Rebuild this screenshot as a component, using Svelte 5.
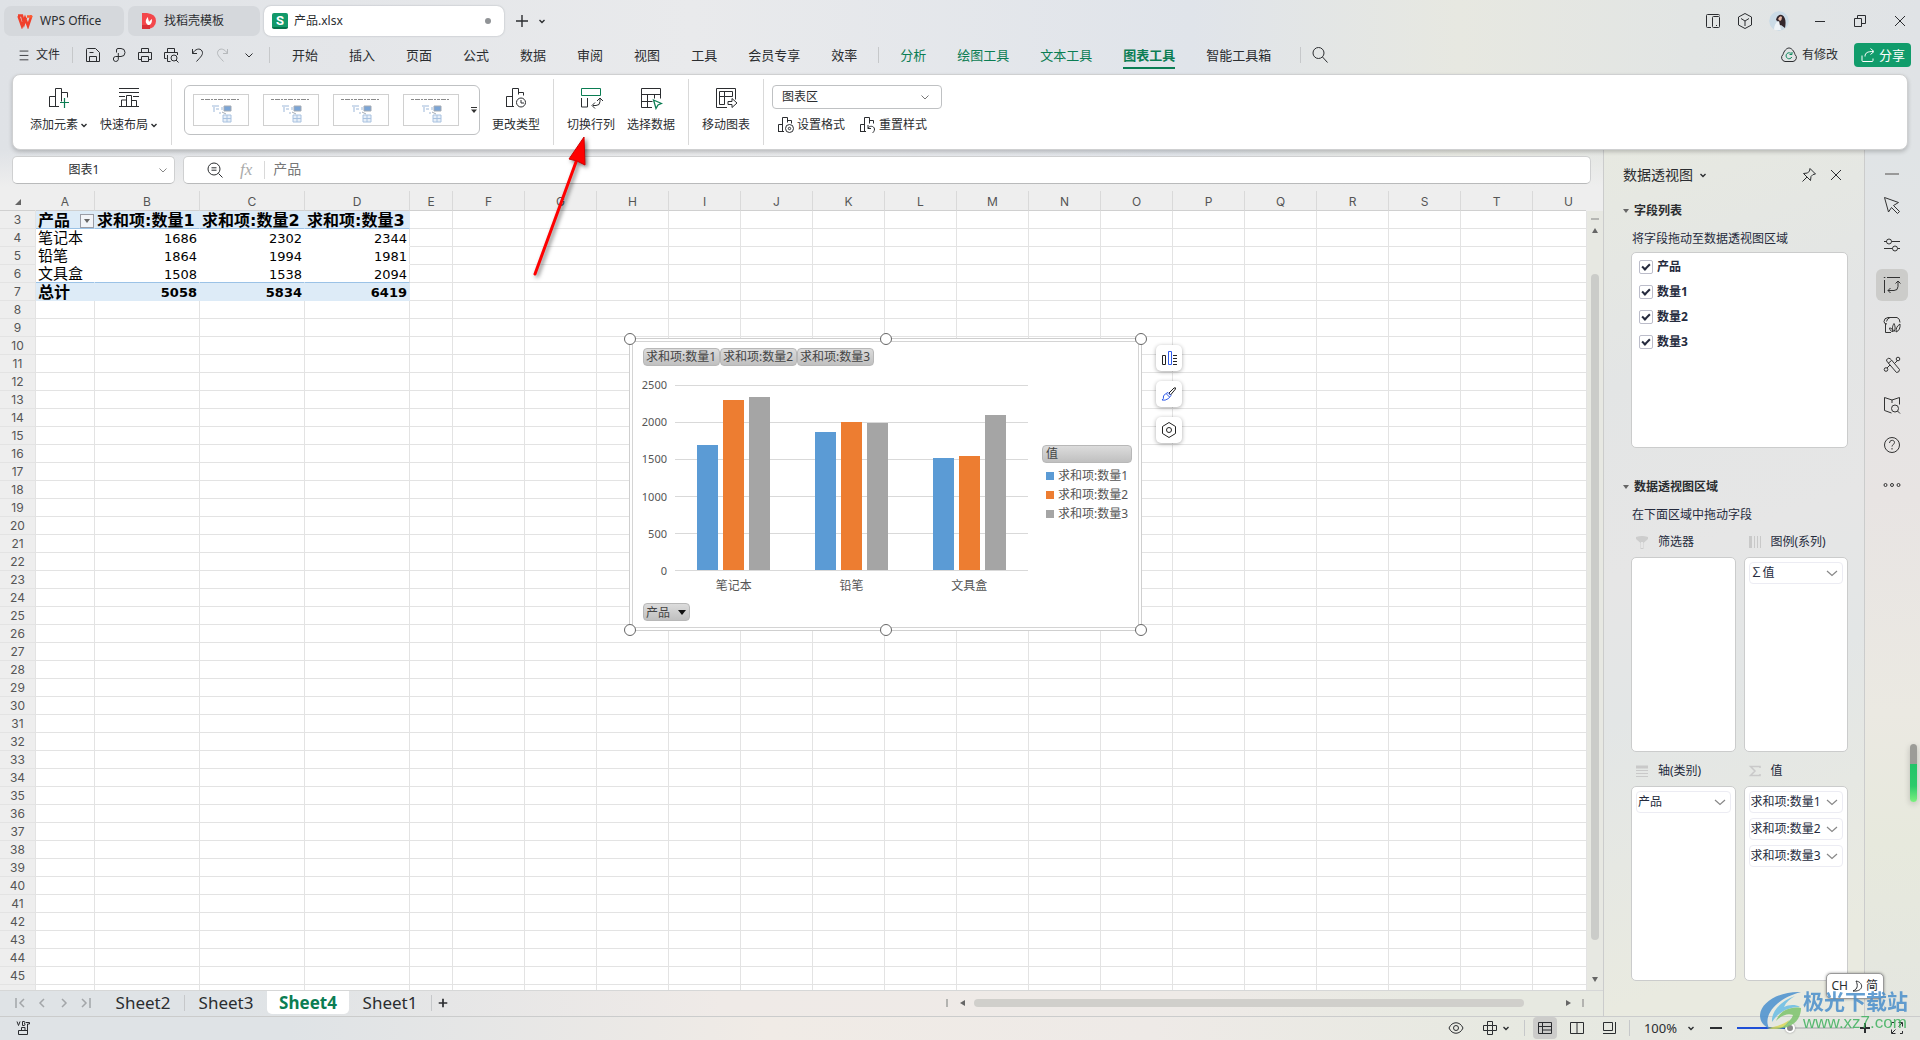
<script lang="ts">
  type Row = { label: string; values: number[]; total?: boolean };

  const series = ["求和项:数量1", "求和项:数量2", "求和项:数量3"];
  const colors = ["#5b9bd5", "#ed7d31", "#a5a5a5"];
  const rows: Row[] = [
    { label: "笔记本", values: [1686, 2302, 2344] },
    { label: "铅笔", values: [1864, 1994, 1981] },
    { label: "文具盒", values: [1508, 1538, 2094] },
    { label: "总计", values: [5058, 5834, 6419], total: true },
  ];
  const products = rows.filter((r) => !r.total);
  const ticks = [2500, 2000, 1500, 1000, 500, 0];

  const letters = "ABCDEFGHIJKLMNOPQRSTU".split("");
  const colWidth = (l: string) => (l === "A" ? 59 : l < "E" ? 105 : l === "E" ? 43 : 72);
  const tail = letters.slice(4);
  const lastRow = 45;
  const emptyRows = Array.from({ length: 39 }, (_, i) => i + 8);

  const menu = ["开始", "插入", "页面", "公式", "数据", "审阅", "视图", "工具", "会员专享", "效率"];
  const toolMenu = ["分析", "绘图工具", "文本工具", "图表工具"];
  const quick = ["save", "export", "print", "preview", "undo", "redo", "chev"];
  const rail = ["cursor", "sliders", "pivot", "style", "magic", "book", "help", "more"];

  let fields = $state([
    { name: "产品", on: true },
    { name: "数量1", on: true },
    { name: "数量2", on: true },
    { name: "数量3", on: true },
  ]);
  let activeSheet = $state("Sheet4");
  let zoom = $state(45);

  const areas = [
    { icon: "funnel", name: "筛选器", items: [] as string[] },
    { icon: "bars", name: "图例(系列)", items: ["∑值"] },
    { icon: "lines", name: "轴(类别)", items: ["产品"] },
    { icon: "sigma", name: "值", items: series },
  ];

  // inner markup of each icon, drawn on a square viewBox of the given size
  const icons: Record<string, [number, string]> = {
    chev: [16, '<path d="M4.500 6.500 8 10l3.500-3.500"/>'],
    widechev: [16, '<path d="m3 6 5 4.500L13 6" stroke-width="1.200"/>'],
    tinychev: [8, '<path d="M1.500 3 4 5.500 6.500 3" stroke-width="1.400"/>'],
    menu: [16, '<path d="M3 3.500h10M3 8.500h10M3 13.500h10"/>'],
    save: [16, '<path d="M1.500 2.500q0-1 1-1h8l4 4v9h-13zM4.500 14.500v-5h7v5M4.500 5.500h4"/>'],
    export: [16, '<path d="M5.500 5.500V3q0-1.500 1.500-1.500h3a3.500 3.500 0 0 1 0 8H4.500a2.500 2.500 0 1 0 2.800 3V6"/>'],
    print: [16, '<path d="M4.500 5V1.500h7V5M4 12.500H1.500v-7h13v7H12M4.500 9.500h7v5h-7z"/>'],
    preview: [16, '<path d="M4.500 5V1.500h7V5M3.500 11.500h-2v-6h13V8M4.500 8v6.500h3"/><circle cx="11" cy="11" r="3"/><path d="m13 13 2.500 2.500"/>'],
    undo: [16, '<path d="M3.500 2v4.500H8M3.500 6.500C6 2 11 .500 13 4c1.800 3.500-1.500 6-5.500 10.500"/>'],
    redo: [16, '<path d="M12.500 2v4.500H8M12.500 6.500C10 2 5 .500 3 4c-1.800 3.500 1.500 6 5.500 10.500" stroke="#b5b8bb"/>'],
    search: [18, '<circle cx="7.500" cy="7" r="5.500"/><path d="m11.500 11 5 5.500"/>'],
    zoomout: [18, '<circle cx="8" cy="8" r="6"/><path d="m12.500 12.500 4 4M5.500 6.800h5M5.500 9.200h5"/>'],
    plus: [14, '<path d="M7 1v12M1 7h12" stroke-width="1.400"/>'],
    device: [18, '<path d="M7 15.500H3.500q-1 0-1-1v-11q0-1 1-1h11q1 0 1 1"/><rect x="8.500" y="4.500" width="7" height="11" rx="1"/><path d="M12 13.500h1"/>'],
    cube: [18, '<path d="M9 1.500 15.500 5v8L9 16.500 2.500 13V5zM5 6.500l4 2.500 4-2.500M9 9v5"/>'],
    min: [14, '<path d="M2 7.500h10"/>'],
    restore: [14, '<path d="M1.500 4.500h7v8h-7zM4.500 4.500v-3h8v8h-4"/>'],
    close: [14, '<path d="m2 2 10 10M12 2 2 12"/>'],
    cloud: [18, '<path d="M5 15.500a4 4 0 0 1-2-7C4 5 6.500 2 9 2s5 3 6 6.500a4 4 0 0 1-2 7z"/><path d="M11.500 8a3 3 0 1 0 .3 3M12 6v2.500H9.500" stroke="#0f8a5f"/>'],
    share: [16, '<path d="M2 8.500v5q0 1 1 1h9q1 0 1-1v-2M5 9.500c0-4 3-5 8-5M10.500 1.500l3.500 3-3.500 3"/>'],
    addel: [24, '<path d="M2.500 20.500v-10h6v10M8.500 20.500v-18h6v13M14.500 6.500h6v5M2 20.500h10"/><path d="M17.500 12v10M13 16.500h9" stroke="#0b7d53" stroke-width="1.200"/>'],
    layout: [24, '<path d="M2 2.500h20M2 6.500h20M2 20.500h20M2 10.500h6M16 10.500h6M4.500 20v-6h5v6M9.500 20V9.500h5V20M14.500 14.500h5V20"/>'],
    change: [24, '<path d="M2.500 20.500v-10h6v10M8.500 20.500v-18h6v6M14.500 6.500h5v3M2 20.500h8"/><circle cx="17" cy="16.500" r="4.500"/><path d="M17 14v3h3"/>'],
    swap: [24, '<path d="M2.500 2.500h19v7h-19z" stroke="#0b7d53"/><path d="M2.500 12v9h6v-9M14 19.500h3q4 0 4-4v-3M18 15l3-3 3 3M16 16.500l-3 3 3 3"/>'],
    pick: [24, '<path d="M13 21.500H2.500v-19h19v10M2.500 8.500h19M2.500 15.500h11M8.500 8.500v13M15.500 8.500v4"/><path d="m14.500 14 8 3.500-3.500 1.500-2 3.500z" stroke="#0b7d53" stroke-width="1.300"/>'],
    move: [24, '<path d="M13 21.500H2.500v-19h19v11M5.500 18.500v-13h13v5h-8v8zM5.500 10.500h5v-5"/><path d="M14 15.500h4v-3l5 4.500-5 4.500v-3h-4z"/>'],
    format: [18, '<path d="M1.500 15.500v-7h4v7M5.500 15.500v-14h5v5M10.500 4.500h4v3M1 15.500h6"/><circle cx="12.500" cy="12.500" r="4"/><circle cx="12.500" cy="12.500" r="1.200"/>'],
    reset: [18, '<path d="M1.500 15.500v-7h4v7M5.500 15.500v-14h5v6M10.500 4.500h4v3M1 15.500h6M9 12.500c1-3 6-3 6.500.500 0 2-1 3-2 4M9 9v3.500h3"/>'],
    pin: [16, '<path d="m9 1.500 5.500 5.500-2.500.5-2 2-.5 4L2.500 6.500l4-.5 2-2zM6 10l-4.500 4.500"/>'],
    cursor: [20, '<path d="m2.500 2.500 14 5-5 3 6 6-2 2-6-6-3 4.500z"/>'],
    sliders: [20, '<path d="M2 6.500h3M9.500 6.500H18M2 13.500h8.500M15.500 13.500H18"/><circle cx="7" cy="6.500" r="2.500"/><circle cx="13" cy="13.500" r="2.500"/>'],
    pivot: [20, '<path d="M5 2.500h13M2.500 5v13M1.800 2.500h1.500M6 15.500h6q4 0 4-4V6M13.500 8.500 16 6l2.500 2.500M8.500 13 6 15.500 8.500 18"/>'],
    style: [20, '<path d="M6 2.500q-4 .500-4 4 0 2.500 3 2.500M3.500 9v8.500H9M6 2.500h9q3 1 3 5M4.500 6.500q.500-3 3.500-4"/><path d="M12 16.500c-2-2-2-5 0-8 1.500 3 1.500 6 0 8zM14 17c0-4 1-6 4-8 .5 4-1 7-4 8zM11 16.500c-2 0-3-1-3.500-3.500 2 0 3 1 3.500 3.500z"/>'],
    magic: [20, '<path d="M4.500 5q2-3.500 5 0l8 9.500q0 3-3 3l-9-10.500q-1-1-1-2zM6 8.500l3.500-3M13 8l3-3M5 13l3-3"/><circle cx="16" cy="4" r="1.800"/><circle cx="4" cy="14.500" r="1.800"/>'],
    book: [20, '<path d="M10 5 2.500 2.500v13l7 2.500M10 5l7.500-2.500v7M10 5v3"/><circle cx="13" cy="13.500" r="3.500"/><path d="m15.500 16 2.500 2.500"/>'],
    help: [20, '<circle cx="10" cy="10" r="7.500"/><path d="M7.500 8c0-3.500 5-3.500 5-.5 0 2-2.500 2-2.500 4M10 13v1.500"/>'],
    more: [20, '<circle cx="3.500" cy="10" r="1.500"/><circle cx="10" cy="10" r="1.500"/><circle cx="16.500" cy="10" r="1.500"/>'],
    funnel: [14, '<path d="M1 2q6-2 12 0v2L8.500 8v6h-3V8L1 4z" fill="#cdcdcd" stroke="none"/><path d="M7 7v6" stroke="#fff"/>'],
    bars: [14, '<path d="M2.500 1v12" stroke="#c9c9c9" stroke-width="3"/><path d="M6.500 1v12M9.500 1v12M12.500 1v12" stroke="#c9c9c9"/>'],
    lines: [14, '<path d="M1 3h12" stroke="#c9c9c9" stroke-width="3"/><path d="M1 6.500h12M1 9.500h12M1 12.500h12" stroke="#c9c9c9"/>'],
    sigma: [14, '<path d="M12 4V2.500H2.500L7 7l-4.500 4.500H12V10" stroke="#c9c9c9" stroke-width="1.500"/>'],
    first: [14, '<path d="M3 2v10M11 3 7 7l4 4" stroke="#a3a6a9" stroke-width="1.500"/>'],
    prev: [14, '<path d="M9 3 5 7l4 4" stroke="#a3a6a9" stroke-width="1.500"/>'],
    next: [14, '<path d="m5 3 4 4-4 4" stroke="#a3a6a9" stroke-width="1.500"/>'],
    last: [14, '<path d="M11 2v10M3 3l4 4-4 4" stroke="#a3a6a9" stroke-width="1.500"/>'],
    macro: [16, '<path d="m2 1.500 1.500 4 1.500-4M7.500 1.500v4h1.500q1 0 1-1t-1-1q1 0 1-1t-1-1zM11 2.500h3.500V4h-2v10.500h-9v-4h9M6.500 10V7.500H10V10M4 14.500h7"/>'],
    eye: [16, '<path d="M1 8c3-7 11-7 14 0-3 7-11 7-14 0z"/><circle cx="8" cy="8" r="2.500"/>'],
    cross: [16, '<path d="M5.500 1.500h5v4h4v5h-4v4h-5v-4h-4v-5h4zM5.500 5.500h5v5h-5z"/>'],
    normal: [16, '<path d="M1.500 2.500h13v11h-13zM1.500 6.500h13M5.500 2.500v11M5.500 10h9"/>'],
    page: [16, '<path d="M1.500 2.500h13v11h-13zM8 2.500v11"/>'],
    read: [16, '<path d="M2.500 2.500h9v8h-9zM14.500 2v11.500H2"/>'],
    minus: [14, '<path d="M1 7h12" stroke-width="2"/>'],
    zoomin: [14, '<path d="M7 2v10M2 7h10" stroke-width="2"/>'],
    expand: [16, '<path d="M9.500 2.500h4v4M13 3 9.500 6.500M6.500 13.500h-4v-4M3 13l3.500-3.500M2.500 5V2.500H5M13.500 11v2.500H11"/>'],
    chart: [16, '<path d="M1.500 5.500h3v9h-3z"/><path d="M7.500 1.500h3v13h-3z" stroke="#2f5bea"/><path d="M12 5.500h4M12 8.500h4M12 11.500h4M12 14.500h4"/>'],
    brush: [16, '<path d="m8 7 5-5q2-1 1.500 1L9.500 9z"/><path d="M7 6.500 10 9.500 7.500 12.500Q4 15 1 14q2-1 1.500-4Q4 7.500 7 6.500zM5.500 8l3 3" stroke="#2f5bea"/>'],
    gear: [16, '<path d="M8 .500 14.500 4.500v7L8 15.500 1.500 11.500v-7z" stroke-linejoin="round"/><circle cx="8" cy="8" r="2.500"/>'],
    moon: [12, '<path d="M5 1c7 1 8 9 0 10H2c5-2 5-6 3-10z"/>'],
  };
</script>

{#snippet icon(name: string, size = icons[name][0])}
  <svg class="icon" width={size} height={size} viewBox="0 0 {icons[name][0]} {icons[name][0]}" aria-hidden="true">
    {@html icons[name][1]}
  </svg>
{/snippet}

{#snippet area(a: (typeof areas)[number])}
  <section class="area">
    <h4>{@render icon(a.icon)}<span>{a.name}</span></h4>
    <div class="drop">
      {#each a.items as item}
        <button class="item"><span>{item}</span>{@render icon("widechev")}</button>
      {/each}
    </div>
  </section>
{/snippet}

<div class="app">
  <header class="titlebar">
    <button class="doc">
      <svg width="16" height="16" viewBox="0 0 16 16" fill="none" stroke-width="2.500">
        <path d="M1 2.500h4l2 8 2-6M1.500 3 5 13l3-8 3 8 3.500-10.500" stroke="#f0402c" />
        <path d="M10 3.500h5" stroke="#ff5b2e" />
      </svg>
      WPS Office
    </button>
    <button class="doc second">
      <svg width="16" height="18" viewBox="0 0 16 18">
        <path d="M1 1h5q9 1 9 8t-9 8H1z" fill="#f3474b" />
        <path d="M1 13h8v4H1z" fill="#d93036" />
        <path d="M7 13c-3-2-3-5 0-8 0 3 1 3 1 5 1-2 2-2 3-3 0 4-1 6-4 6z" fill="#fff" />
      </svg>
      找稻壳模板
    </button>
    <button class="doc current">
      <span class="sheetlogo">S</span>
      产品.xlsx
      <i class="unsaved"></i>
    </button>
    <button class="bare newtab" aria-label="新建">{@render icon("plus")}</button>
    <button class="bare" aria-label="标签列表">{@render icon("tinychev")}</button>
    <div class="window">
      <button class="bare" aria-label="设备">{@render icon("device")}</button>
      <button class="bare" aria-label="应用">{@render icon("cube")}</button>
      <svg class="avatar" width="20" height="20" viewBox="0 0 20 20">
        <circle cx="10" cy="10" r="10" fill="#cbdbe6" />
        <path d="M7 9q1-6 6-5c4 2 4 8 3 13l-4-3-3 1q2-4-2-6z" fill="#33272c" />
        <path d="M9 8q2-4 4-2 0 3-2 4z" fill="#e7b9a6" />
        <path d="M5 19q0-7 5-9l2 9z" fill="#eef3f7" />
      </svg>
      <button class="bare" aria-label="最小化">{@render icon("min")}</button>
      <button class="bare" aria-label="还原">{@render icon("restore")}</button>
      <button class="bare" aria-label="关闭">{@render icon("close")}</button>
    </div>
  </header>

  <nav class="menubar">
    <button class="bare file">{@render icon("menu", 14)} 文件</button>
    <span class="sep"></span>
    <div class="quick">
      {#each quick as q}
        <button class="bare" aria-label={q}>{@render icon(q)}</button>
      {/each}
    </div>
    <span class="sep"></span>
    <div class="tabs">
      {#each menu as m}
        <button class="bare">{m}</button>
      {/each}
    </div>
    <span class="sep"></span>
    <div class="tabs tools">
      {#each toolMenu as m}
        <button class="bare green" class:active={m === "图表工具"}>{m}</button>
      {/each}
      <button class="bare">智能工具箱</button>
    </div>
    <span class="sep"></span>
    <button class="bare find" aria-label="搜索">{@render icon("search")}</button>
    <button class="bare modified">{@render icon("cloud")} 有修改</button>
    <button class="share">{@render icon("share")}分享</button>
  </nav>

  <div class="ribbon">
    <div class="group first">
      <button class="big">{@render icon("addel")}<span>添加元素 {@render icon("tinychev")}</span></button>
      <button class="big">{@render icon("layout")}<span>快速布局 {@render icon("tinychev")}</span></button>
    </div>
    <div class="group gallery-group">
      <div class="gallery">
        {#each [1, 2, 3, 4] as n (n)}
          <button class="thumb" aria-label="图表样式 {n}">
            <svg width="54" height="30" viewBox="0 0 54 30">
              <path d="M7 4.500h39" stroke="#8a8a8a" stroke-dasharray="3 1 5 1 2 1" />
              <path d="M18 11h7M20 12v5M22 14h3M28 12v3M26 17v2" stroke="#9db8da" />
              <path d="M30 11h7v5h-7zM28 17l4 2" fill="#7aa4d6" stroke="#a5abb3" />
              <path d="M29 20h8v7h-8zM33 20v7M29 23.500h8" fill="#e7eff8" stroke="#a9c2e0" />
            </svg>
          </button>
        {/each}
        <button class="bare more" aria-label="更多样式">
          <svg width="8" height="8" viewBox="0 0 8 8"><path d="M1 1.500h6" stroke="#333" /><path d="M1 3.500h6L4 7z" fill="#333" /></svg>
        </button>
      </div>
      <button class="big">{@render icon("change")}<span>更改类型</span></button>
    </div>
    <div class="group">
      <button class="big">{@render icon("swap")}<span>切换行列</span></button>
      <button class="big">{@render icon("pick")}<span>选择数据</span></button>
    </div>
    <div class="group">
      <button class="big">{@render icon("move")}<span>移动图表</span></button>
    </div>
    <div class="group last">
      <label class="pick">
        <select aria-label="图表元素"><option>图表区</option></select>
        {@render icon("chev")}
      </label>
      <div class="pair">
        <button class="bare">{@render icon("format")}设置格式</button>
        <button class="bare">{@render icon("reset")}重置样式</button>
      </div>
    </div>
  </div>

  <div class="main">
    <div class="workspace">
      <div class="formula">
        <div class="namebox">
          <input aria-label="名称框" value="图表1" />
          {@render icon("chev")}
        </div>
        <div class="fx">
          {@render icon("zoomout")}
          <em>fx</em>
          <input aria-label="编辑栏" value="产品" />
        </div>
      </div>

      <div class="sheet">
        <div class="grid">
          <table>
            <colgroup>
              <col style="width:36px" />
              {#each letters as l (l)}<col style="width:{colWidth(l)}px" />{/each}
            </colgroup>
            <thead>
              <tr>
                <th class="corner"><svg width="8" height="8" viewBox="0 0 8 8"><path d="M7 1v6H1z" fill="#666" /></svg></th>
                {#each letters as l (l)}<th>{l}</th>{/each}
              </tr>
            </thead>
            <tbody>
              <tr class="pivot head">
                <th>3</th>
                <td><div class="filter">产品 <button aria-label="筛选产品"><i></i></button></div></td>
                {#each series as s (s)}<td>{s}</td>{/each}
                {#each tail as l (l)}<td></td>{/each}
              </tr>
              {#each rows as r, i (r.label)}
                <tr class="pivot" class:total={r.total}>
                  <th>{i + 4}</th>
                  <td>{r.label}</td>
                  {#each r.values as v}<td class="num">{v}</td>{/each}
                  {#each tail as l (l)}<td></td>{/each}
                </tr>
              {/each}
              {#each emptyRows as n (n)}
                <tr>
                  <th>{n <= lastRow ? n : ""}</th>
                  {#each letters as l (l)}<td></td>{/each}
                </tr>
              {/each}
            </tbody>
          </table>

          <figure class="chart">
            <div class="canvas">
              <div class="pills">
                {#each series as s (s)}<span class="pill">{s}</span>{/each}
              </div>
              <div class="body">
                <div class="axis">
                  {#each ticks as t (t)}<span>{t}</span>{/each}
                </div>
                <div class="plotcol">
                  <div class="plot">
                    {#each products as p (p.label)}
                      <div class="cat">
                        {#each p.values as v, i}
                          <i style="height:{(v / 2500) * 100}%;background:{colors[i]}"></i>
                        {/each}
                      </div>
                    {/each}
                  </div>
                  <div class="cats">
                    {#each products as p (p.label)}<span>{p.label}</span>{/each}
                  </div>
                </div>
                <div class="legend">
                  <span class="pill">值</span>
                  {#each series as s, i (s)}
                    <div><i style="background:{colors[i]}"></i>{s}</div>
                  {/each}
                </div>
              </div>
              <span class="pill drop-pill">产品 <b></b></span>
            </div>
            {#each ["tl", "tc", "tr", "bl", "bc", "br"] as h (h)}<i class="handle {h}"></i>{/each}
            <div class="float">
              <button aria-label="图表元素">{@render icon("chart")}</button>
              <button aria-label="图表样式">{@render icon("brush")}</button>
              <button aria-label="图表设置">{@render icon("gear")}</button>
            </div>
          </figure>
        </div>
        <div class="vscroll">
          <span class="dash"></span>
          <span class="up"></span>
          <span class="thumb-v"></span>
          <span class="down"></span>
        </div>
      </div>

      <footer class="sheets">
        <div class="nav">
          {#each ["first", "prev", "next", "last"] as n (n)}
            <button class="bare" aria-label={n}>{@render icon(n)}</button>
          {/each}
        </div>
        {#each ["Sheet2", "Sheet3", "Sheet4", "Sheet1"] as s (s)}
          <button class="sheet-tab" class:active={s === activeSheet} onclick={() => (activeSheet = s)}>{s}</button>
          {#if s === "Sheet2" || s === "Sheet1"}<span class="sep"></span>{/if}
        {/each}
        <button class="bare add" aria-label="新建工作表">{@render icon("zoomin", 12)}</button>
        <div class="hscroll">
          <span class="bar"></span>
          <span class="left"></span>
          <span class="thumb-h"></span>
          <span class="right"></span>
          <span class="bar"></span>
        </div>
      </footer>
    </div>

    <aside class="panel">
      <div class="panel-title">
        <h2>数据透视图</h2>
        {@render icon("tinychev")}
        <button class="bare" aria-label="固定">{@render icon("pin")}</button>
        <button class="bare" aria-label="关闭窗格">{@render icon("close")}</button>
      </div>
      <h3><i></i>字段列表</h3>
      <p>将字段拖动至数据透视图区域</p>
      <div class="fields">
        {#each fields as f (f.name)}
          <label><input type="checkbox" bind:checked={f.on} />{f.name}</label>
        {/each}
      </div>
      <h3><i></i>数据透视图区域</h3>
      <p>在下面区域中拖动字段</p>
      <div class="areas">
        {#each areas as a (a.name)}{@render area(a)}{/each}
      </div>
    </aside>

    <nav class="rail">
      <span class="grip"></span>
      {#each rail as r (r)}
        <button class="bare" class:on={r === "pivot"} aria-label={r}>{@render icon(r)}</button>
      {/each}
    </nav>
  </div>

  <footer class="status">
    <button class="bare macro" aria-label="宏">{@render icon("macro")}</button>
    <button class="bare" aria-label="护眼">{@render icon("eye")}</button>
    <button class="bare reading" aria-label="阅读">{@render icon("cross")}{@render icon("tinychev")}</button>
    <span class="sep"></span>
    <div class="views">
      <button class="bare on" aria-label="普通视图">{@render icon("normal")}</button>
      <button class="bare" aria-label="分页预览">{@render icon("page")}</button>
      <button class="bare" aria-label="阅读布局">{@render icon("read")}</button>
    </div>
    <span class="sep"></span>
    <button class="bare percent">100% {@render icon("tinychev")}</button>
    <button class="bare" aria-label="缩小">{@render icon("minus")}</button>
    <input type="range" aria-label="显示比例" min="0" max="100" bind:value={zoom} />
    <button class="bare" aria-label="放大">{@render icon("zoomin")}</button>
    <button class="bare full" aria-label="全屏">{@render icon("expand")}</button>
  </footer>

  <svg class="arrow" width="64" height="150" viewBox="0 0 64 150" aria-hidden="true">
    <path d="M9 140 50 28" stroke="#f00" stroke-width="3" stroke-linecap="round" />
    <path d="m58 3 1 28-8-4-8-2z" fill="#f00" stroke="#d00000" />
  </svg>

  <span class="battery"></span>

  <div class="ime">CH {@render icon("moon")} 简</div>

  <div class="watermark">
    <svg width="44" height="40" viewBox="0 0 44 40">
      <path d="M42 1C22 0 2 10 1 24c0 6 3 11 9 13C4 26 15 8 42 1z" fill="#4a90cf" />
      <path d="M36 5C22 10 12 20 13 31c5-8 14-15 28-15-5-3-12-2-16 0 2-5 6-8 11-11z" fill="#69bde5" />
      <path d="M42 17c-12-2-22 4-25 13 6-6 12-8 17-6-2 7-11 12-26 13 20 4 34-5 34-20z" fill="#7cc36c" />
      <path d="M8 37c10-1 17-4 22-8-3 7-11 11-22 8z" fill="#d9d95a" />
    </svg>
    <div><strong>极光下载站</strong><span>www.xz7.com</span></div>
  </div>
</div>

<style>
  :global(body) {
    margin: 0;
  }
  .app {
    --line: #cbcccc;
    --ink: #2b2d30;
    --green: #0b7d53;
    position: relative;
    display: flex;
    flex-direction: column;
    height: 100vh;
    overflow: hidden;
    font: 12px/16px "Noto Sans", "Noto Sans CJK SC", sans-serif;
    color: var(--ink);
    background: linear-gradient(90deg, #dfe2e6 0%, #e9eaec 36%, #e0e4ea 62%, #e7e8e1 76%, #e2e5e4 88%, #e0e3e6 100%);
  }
  .app *,
  .app *::before {
    box-sizing: border-box;
  }
  button,
  input,
  select {
    margin: 0;
    font: inherit;
    color: inherit;
  }
  .icon {
    flex: none;
    fill: none;
    stroke: currentColor;
    stroke-width: 1;
  }
  .bare {
    display: flex;
    align-items: center;
    justify-content: center;
    padding: 0;
    background: none;
    border: none;
    white-space: nowrap;
  }
  .sep {
    flex: none;
    width: 1px;
    height: 16px;
    background: #c6c8ca;
  }

  /* title bar */
  .titlebar {
    display: flex;
    flex: none;
    align-items: center;
    gap: 4px;
    height: 36px;
    padding: 6px 13px 0 4px;
  }
  .doc {
    display: flex;
    align-items: center;
    gap: 7px;
    width: 120px;
    height: 30px;
    padding: 0 13px;
    background: #d5d8dc;
    border: none;
    border-radius: 7px;
    white-space: nowrap;
  }
  .doc.second {
    width: 132px;
  }
  .doc.current {
    width: 240px;
    padding: 0 13px 0 8px;
    gap: 6px;
    background: #fff;
    box-shadow: 0 0 2px #a9adb2;
  }
  .sheetlogo {
    width: 16px;
    height: 16px;
    font: bold 13px/15px Roboto, sans-serif;
    color: #fff;
    text-align: center;
    background: #12996a;
    border-bottom: 2px solid #06724b;
    border-radius: 2px;
  }
  .unsaved {
    width: 6px;
    height: 6px;
    margin-left: auto;
    background: #909396;
    border-radius: 50%;
  }
  .newtab {
    margin: 0 5px 0 7px;
  }
  .window {
    display: flex;
    align-items: center;
    gap: 14px;
    margin-left: auto;
  }
  .window .avatar {
    margin: 0 10px 0 1px;
  }
  .window button:nth-last-child(-n + 2) {
    margin-left: 12px;
  }
  .avatar {
    border-radius: 50%;
  }

  /* menu bar */
  .menubar {
    display: flex;
    flex: none;
    align-items: center;
    height: 38px;
    padding: 0 9px 0 17px;
  }
  .file {
    gap: 5px;
    margin-right: 12px;
  }
  .quick {
    display: flex;
    gap: 10px;
    margin: 0 12px 0 12px;
  }
  .tabs {
    display: flex;
    gap: 31px;
    margin: 0 21px 0 22px;
    font-size: 13px;
    line-height: 24px;
  }
  .tabs.tools {
    margin: 0 29px 0 21px;
  }
  .tabs .green {
    color: var(--green);
  }
  .tabs .active {
    font-weight: bold;
    box-shadow: 0 2px var(--green);
  }
  .find {
    margin-left: 10px;
  }
  .modified {
    gap: 4px;
    margin: 0 16px 0 auto;
  }
  .share {
    display: flex;
    align-items: center;
    gap: 3px;
    height: 24px;
    padding: 0 6px;
    font-size: 13px;
    color: #fff;
    background: #119c6b;
    border: none;
    border-radius: 4px;
  }

  /* ribbon */
  .ribbon {
    position: relative;
    display: flex;
    flex: none;
    height: 76px;
    margin: 0 12px;
    padding: 4px 0;
    background: #fff;
    border: 1px solid #cfd0d1;
    border-radius: 8px;
    box-shadow: 0 2px 4px #0003;
  }
  .group {
    display: flex;
    align-items: flex-start;
    gap: 12px;
    padding: 0 13px;
    border-right: 1px solid #d9d9d9;
  }
  .group.first {
    padding: 0 13px 0 17px;
  }
  .group.gallery-group {
    padding: 0 13px 0 12px;
  }
  .group.last {
    flex-direction: column;
    gap: 7px;
    padding: 6px 8px;
    border: none;
  }
  .big {
    display: flex;
    flex-direction: column;
    align-items: center;
    gap: 7px;
    padding: 7px 0 0;
    background: none;
    border: none;
    white-space: nowrap;
  }
  .big span {
    display: flex;
    align-items: center;
    gap: 2px;
  }
  .gallery {
    display: flex;
    align-items: center;
    gap: 14px;
    height: 50px;
    margin-top: 6px;
    padding: 0 1px 0 8px;
    border: 1px solid #bfc1c3;
    border-radius: 6px;
  }
  .thumb {
    display: flex;
    width: 56px;
    height: 32px;
    padding: 0;
    background: #fff;
    border: 1px solid #d0d0d0;
  }
  .thumb svg {
    fill: none;
  }
  .gallery .more {
    margin-left: -3px;
  }
  .pick {
    display: grid;
    grid-template-columns: 1fr 24px;
    align-items: center;
    width: 170px;
    height: 24px;
    border: 1px solid #bfc1c3;
    border-radius: 4px;
  }
  .pick select {
    grid-area: 1 / 1 / 2 / 3;
    height: 22px;
    padding: 0 9px;
    appearance: none;
    background: none;
    border: none;
  }
  .pick .icon {
    grid-area: 1 / 2;
    color: #777;
    pointer-events: none;
  }
  .pair {
    display: flex;
    gap: 14px;
    padding-left: 5px;
  }
  .pair button {
    gap: 2px;
  }

  .main {
    display: flex;
    flex: 1;
    min-height: 0;
  }
  .workspace {
    display: flex;
    flex: 1;
    flex-direction: column;
    min-width: 0;
  }
  .formula {
    display: flex;
    gap: 8px;
    padding: 6px 12px 7px 12px;
    background: linear-gradient(#eeee0000, #eeeeee 90%);
  }
  .namebox,
  .fx {
    display: flex;
    align-items: center;
    height: 28px;
    background: #fff;
    border: 1px solid #cfd0d1;
    border-bottom-color: #b9babb;
    border-radius: 5px;
  }
  .namebox {
    width: 163px;
    padding-right: 3px;
  }
  .namebox input {
    flex: 1;
    min-width: 0;
    padding: 0;
    text-align: center;
    background: none;
    border: none;
  }
  .namebox .icon {
    color: #888;
  }
  .fx {
    flex: 1;
    padding-left: 22px;
  }
  .fx em {
    margin: 0 12px 0 16px;
    font: italic 17px/20px "Liberation Serif", serif;
    color: #aaa;
  }
  .fx input {
    flex: 1;
    padding: 0 0 2px 8px;
    font-size: 14px;
    line-height: 16px;
    color: #777;
    background: none;
    border: none;
    border-left: 1px solid #d9d9d9;
  }

  /* grid */
  .sheet {
    display: flex;
    flex: 1;
    min-height: 0;
    background: #eee;
  }
  .grid {
    position: relative;
    flex: 1;
    min-width: 0;
    overflow: hidden;
    background: #fff;
  }
  table {
    width: 0;
    table-layout: fixed;
    border-spacing: 0;
  }
  th,
  td {
    height: 18px;
    padding: 0;
    border-right: 1px solid #e3e3e3;
    border-bottom: 1px solid #e3e3e3;
    line-height: 17px;
    white-space: nowrap;
  }
  th {
    font-family: Inter, sans-serif;
    font-weight: normal;
    color: #555;
    background: #eee;
  }
  thead th {
    height: 20px;
    padding-top: 2px;
    border-right-color: #d9d9d9;
    border-bottom-color: #d0d0d0;
  }
  .corner {
    text-align: center;
    border-right-color: #eee;
  }
  .pivot td:nth-child(-n + 5) {
    padding: 2px 0 0 2px;
    font-family: "DejaVu Sans", "Noto Sans CJK SC", sans-serif;
    font-size: 15px;
    line-height: 15px;
    color: #000;
    border-color: #fff;
  }
  .pivot td.num:nth-child(-n + 5) {
    padding-right: 2px;
    font-size: 13px;
    text-align: right;
  }
  .pivot td:nth-child(5) {
    border-right-color: #e3e3e3;
  }
  .pivot.head td:nth-child(-n + 5),
  .pivot.total td:nth-child(-n + 5) {
    font-weight: bold;
    background: #ddebf7;
    border-color: #ddebf7;
  }
  .pivot.head td:nth-child(-n + 5),
  .pivot.total td:nth-child(2) {
    font-size: 16px;
  }
  .pivot.head td:nth-child(-n + 5),
  .pivot:nth-child(4) td:nth-child(-n + 5) {
    border-bottom-color: #9bc2e6;
  }
  .filter {
    display: flex;
    align-items: center;
    justify-content: space-between;
  }
  .filter button {
    display: flex;
    align-items: center;
    justify-content: center;
    width: 14px;
    height: 14px;
    padding: 0;
    background: #f2f4f8;
    border: 1px solid #9a9ca5;
  }
  .filter i,
  .panel h3 i {
    border: 3px solid transparent;
    border-top: 4px solid #666;
    border-bottom: none;
  }

  .vscroll {
    display: flex;
    flex-direction: column;
    align-items: center;
    width: 17px;
    margin-top: 20px;
    padding: 7px 0 8px;
    background: #e7e8e2;
    border-left: 1px solid #e3e3e3;
  }
  .dash {
    width: 8px;
    height: 2px;
    margin-bottom: 8px;
    background: #b5b6b3;
  }
  .up,
  .down {
    border: 3px solid transparent;
  }
  .up {
    border-top: none;
    border-bottom: 5px solid #666;
  }
  .down {
    border-bottom: none;
    border-top: 5px solid #666;
  }
  .thumb-v {
    flex: 1;
    width: 8px;
    margin: 41px 0 37px;
    background: #cbccc9;
    border-radius: 4px;
  }

  /* chart, an object floating over the cells */
  .chart {
    position: absolute;
    top: 147px;
    left: 629px;
    width: 513px;
    height: 293px;
    margin: 0;
    padding: 2px;
    color: #555;
    background: #fff;
    border: 1px solid #cfcfcf;
  }
  .canvas {
    height: 100%;
    padding: 6px 8px 6px 10px;
    border: 1px solid #d4d4d4;
  }
  .pills {
    display: flex;
  }
  .pill {
    height: 18px;
    padding: 0 3px;
    line-height: 15px;
    color: #444;
    background: linear-gradient(#dcdcdc, #c0c0c0);
    border: 1px solid #b8b8b8;
    border-radius: 4px;
    white-space: nowrap;
  }
  .pills .pill {
    width: 77px;
    padding: 0 2px;
  }
  .body {
    display: flex;
    margin-top: 19px;
  }
  .axis {
    display: flex;
    flex-direction: column;
    justify-content: space-between;
    width: 24px;
    height: 198px;
    margin: -6px 8px 0 0;
    font-size: 11px;
    line-height: 12px;
    text-align: right;
  }
  .axis span {
    align-self: flex-end;
  }
  .plotcol {
    flex: 1;
  }
  .plot {
    display: flex;
    height: 186px;
    background: repeating-linear-gradient(#d9d9d9 0 1px, transparent 1px 37px);
  }
  .cat {
    display: flex;
    flex: 1;
    align-items: flex-end;
    justify-content: center;
    gap: 5px;
    height: 185px;
  }
  .cat i {
    width: 21px;
  }
  .cats {
    display: flex;
    padding-top: 7px;
    text-align: center;
  }
  .cats span {
    flex: 1;
  }
  .legend {
    width: 90px;
    margin: 60px -2px 0 14px;
  }
  .legend .pill {
    display: block;
    margin-bottom: 3px;
  }
  .legend div {
    display: flex;
    align-items: center;
    gap: 4px;
    padding-left: 4px;
    line-height: 19px;
    white-space: nowrap;
  }
  .legend i {
    width: 8px;
    height: 8px;
  }
  .drop-pill {
    display: flex;
    align-items: center;
    justify-content: space-between;
    width: 47px;
    margin-top: 9px;
    padding-left: 2px;
  }
  .drop-pill b {
    border: 4px solid transparent;
    border-top: 5px solid #111;
    border-bottom: none;
  }
  .handle {
    position: absolute;
    width: 12px;
    height: 12px;
    background: #fff;
    border: 1px solid #666;
    border-radius: 50%;
    transform: translate(-50%, -50%);
  }
  .tl,
  .tc,
  .tr {
    top: 0;
  }
  .bl,
  .bc,
  .br {
    top: 100%;
  }
  .tl,
  .bl {
    left: 0;
  }
  .tc,
  .bc {
    left: 50%;
  }
  .tr,
  .br {
    left: 100%;
  }
  .float {
    position: absolute;
    top: 6px;
    left: 526px;
    display: flex;
    flex-direction: column;
    gap: 10px;
  }
  .float button {
    display: flex;
    align-items: center;
    justify-content: center;
    width: 26px;
    height: 26px;
    padding: 0;
    color: #222;
    background: #fff;
    border: none;
    border-radius: 5px;
    box-shadow: 0 1px 4px #0005;
  }

  /* sheet tabs */
  .sheets {
    display: flex;
    flex: none;
    align-items: center;
    height: 26px;
    padding-bottom: 2px;
    background: linear-gradient(90deg, #dfe3e6 15%, #efeae7 45%, #eeeae7 75%, #e7e9e1 90%);
    border-top: 1px solid #d6d7d7;
  }
  .nav {
    display: flex;
    gap: 8px;
    width: 102px;
    padding-left: 13px;
  }
  .sheet-tab {
    align-self: flex-start;
    width: 82px;
    height: 23px;
    padding: 0;
    font-size: 17px;
    line-height: 20px;
    background: none;
    border: none;
  }
  .sheet-tab.active {
    font-weight: bold;
    color: var(--green);
    background: #fff;
    border-radius: 0 0 5px 5px;
  }
  .add {
    padding: 4px 0 4px 5px;
  }
  .hscroll {
    display: flex;
    align-items: center;
    width: 638px;
    margin-left: auto;
    margin-right: 19px;
  }
  .bar {
    width: 2px;
    height: 8px;
    background: #b3b3b0;
  }
  .left,
  .right {
    border: 3px solid transparent;
  }
  .left {
    margin: 0 9px 0 12px;
    border-left: none;
    border-right: 5px solid #666;
  }
  .right {
    margin: 0 11px 0 42px;
    border-right: none;
    border-left: 5px solid #666;
  }
  .thumb-h {
    flex: 1;
    height: 8px;
    background: #d0cfcb;
    border-radius: 4px;
  }

  /* task pane */
  .panel {
    width: 261px;
    padding: 13px 16px 0 19px;
    background: linear-gradient(160deg, #e7e9e1 0%, #e3e5e5 25%, #e6e6e6 45%, #e3e6e6 60%, #e9eae0 90%);
    border-left: 1px solid var(--line);
  }
  .panel-title {
    display: flex;
    align-items: center;
    gap: 6px;
    height: 24px;
    padding-right: 5px;
  }
  .panel-title h2 {
    margin: 0;
    font-size: 14px;
    font-weight: normal;
  }
  .panel-title button {
    margin-left: 6px;
  }
  .panel-title .icon + button {
    margin-left: auto;
  }
  .panel h3 {
    display: flex;
    align-items: center;
    gap: 5px;
    margin: 16px 0 0;
    font-size: 12px;
    line-height: 16px;
  }
  .panel p {
    margin: 12px 0 0 9px;
    color: #252b3d;
  }
  .panel p + div {
    margin-left: 8px;
  }
  .fields {
    display: flex;
    flex-direction: column;
    gap: 9px;
    height: 196px;
    margin: 5px 0 31px;
    padding: 6px 7px;
    background: #fff;
    border: 1px solid var(--line);
    border-radius: 5px;
  }
  .fields label {
    display: flex;
    align-items: center;
    gap: 4px;
    font-weight: bold;
    color: #252b3d;
  }
  .fields input {
    display: flex;
    align-items: center;
    justify-content: center;
    width: 14px;
    height: 14px;
    appearance: none;
    background: #fff;
    border: 1px solid #bcbdca;
    border-radius: 2px;
  }
  .fields input:checked::before {
    content: "";
    width: 8px;
    height: 5px;
    border: solid #252b3d;
    border-width: 0 0 2px 2px;
    transform: rotate(-45deg) translate(1px, -1px);
  }
  .areas {
    display: grid;
    grid-template-columns: 1fr 1fr;
    gap: 11px 8px;
    margin-top: 11px;
  }
  .area h4 {
    display: flex;
    align-items: center;
    gap: 9px;
    margin: 0 0 7px;
    padding-left: 4px;
    font-weight: normal;
    line-height: 16px;
    color: #252b3d;
  }
  .drop {
    display: flex;
    flex-direction: column;
    gap: 5px;
    height: 195px;
    padding: 4px;
    background: #fff;
    border: 1px solid var(--line);
    border-radius: 5px;
  }
  .item {
    display: flex;
    align-items: center;
    justify-content: space-between;
    height: 22px;
    padding: 0 2px 0 1px;
    color: #252b3d;
    white-space: nowrap;
    background: #fff;
    border: 1px solid #ececf3;
    border-radius: 4px;
  }
  .item .icon {
    color: #888;
  }

  .rail {
    display: flex;
    flex-direction: column;
    align-items: center;
    gap: 8px;
    width: 56px;
    padding: 23px 2px 0 0;
    color: #333;
    background: linear-gradient(#e0e4e6, #e8e4e3 40%, #ebe9e2 65%, #e7e9dd 80%, #e4e6e0);
    border-left: 1px solid var(--line);
  }
  .grip {
    flex: none;
    width: 14px;
    height: 2px;
    margin-bottom: 6px;
    background: #999;
  }
  .rail button {
    width: 32px;
    height: 32px;
    border-radius: 6px;
  }
  .rail .on,
  .views .on {
    background: #ccccca;
  }

  /* status bar */
  .status {
    display: flex;
    flex: none;
    align-items: center;
    gap: 14px;
    height: 24px;
    padding: 0 15px 2px;
    background: linear-gradient(90deg, #dfe3e6 15%, #f0ebe6 40%, #eeeae7 60%, #e7e9e1 78%, #e4e6e1);
    border-top: 1px solid var(--line);
  }
  .macro {
    margin-right: auto;
  }
  .reading {
    gap: 4px;
    padding-left: 4px;
  }
  .views {
    display: flex;
    gap: 8px;
    margin-left: -6px;
  }
  .views button {
    width: 24px;
    height: 22px;
    border-radius: 4px;
  }
  .views + .sep {
    margin-left: -6px;
  }
  .percent {
    gap: 10px;
    font-size: 13px;
  }
  .status input {
    width: 117px;
    height: 12px;
    margin-right: -10px;
    appearance: none;
    background: linear-gradient(90deg, #1f4fd6 45%, #c2c4c3 45%) center / 100% 2px no-repeat;
  }
  .status input::-webkit-slider-thumb {
    width: 10px;
    height: 10px;
    appearance: none;
    background: #888;
    border: 2px solid #fff;
    border-radius: 50%;
    box-shadow: 0 0 2px #0006;
  }
  .full {
    margin-left: 3px;
  }

  /* overlays */
  .arrow {
    position: absolute;
    top: 134px;
    left: 526px;
    fill: none;
    filter: drop-shadow(2px 2px 2px #0008);
    pointer-events: none;
  }
  .battery {
    position: absolute;
    top: 744px;
    right: 3px;
    width: 7px;
    height: 58px;
    background: linear-gradient(#9c9c97 20px, #21c468 20px, #2ccb6b 42px, #7cf07e);
    border-radius: 4px;
    box-shadow: 0 2px 6px #0003;
  }
  .ime {
    position: absolute;
    right: 36px;
    bottom: 41px;
    display: flex;
    align-items: center;
    gap: 3px;
    height: 26px;
    padding: 0 5px;
    font-size: 12px;
    background: #fff;
    border: 1px solid #999;
    border-radius: 5px;
    box-shadow: 0 0 3px #0006;
  }
  .watermark {
    position: absolute;
    right: 12px;
    bottom: 7px;
    display: flex;
    align-items: center;
    opacity: 0.85;
    pointer-events: none;
  }
  .watermark strong,
  .watermark span {
    display: block;
    font-size: 21px;
    line-height: 24px;
    color: #4a8fcb;
  }
  .watermark span {
    font: 17px/20px "Liberation Sans", sans-serif;
    color: #3fb15e;
  }
</style>
